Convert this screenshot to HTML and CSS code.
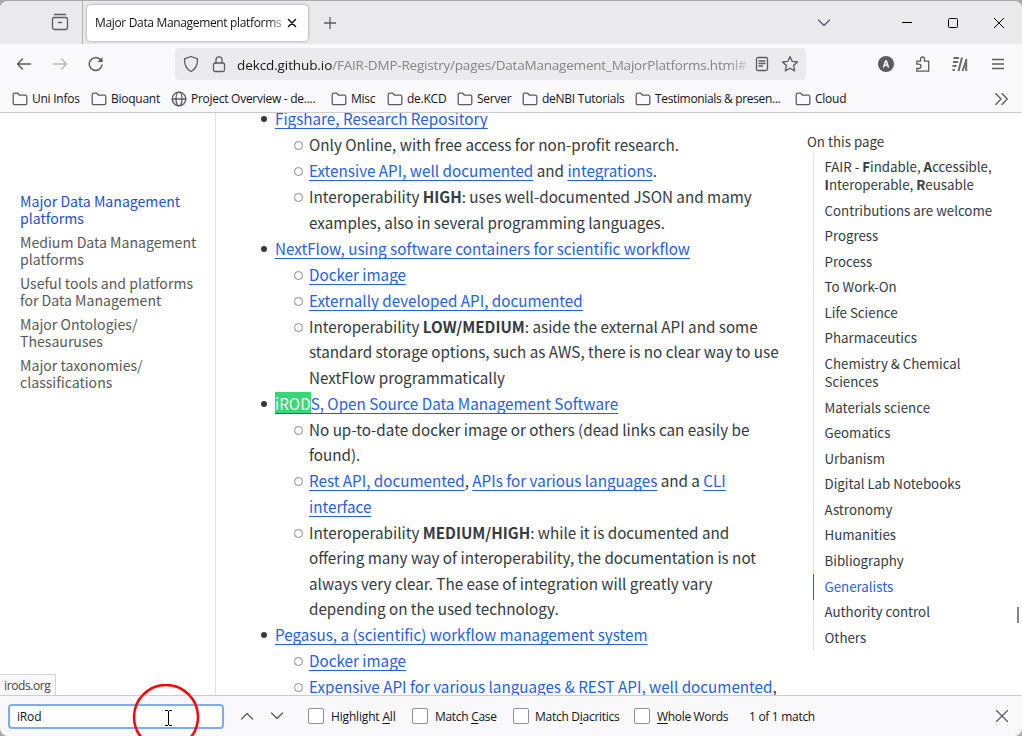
FILE: index.html
```html
<!DOCTYPE html>
<html lang="en">
<head>
<meta charset="utf-8">
<title>Major Data Management platforms</title>
<link rel="stylesheet" href="styles.css">
</head>
<body>
<div class="window">
  <div class="tabbar">
    <div class="tabview"><svg width="18" height="18" viewBox="0 0 18 18" class="ic"><path d="M3.5 1.5h11" /><rect x="1.5" y="4.5" width="15" height="12" rx="2"/><path d="M7.500 9.500h3"/></svg></div>
    <div class="tab"><span class="tab-title">Major Data Management platforms</span><svg width="10" height="10" viewBox="0 0 10 10" class="ic dark"><path d="M1.500 1.500l7 7M8.500 1.500l-7 7"/></svg></div>
    <svg width="12" height="12" viewBox="0 0 12 12" class="ic plus"><path d="M6 0v12M0 6h12"/></svg>
    <div class="winbtns">
      <svg width="12" height="8" viewBox="0 0 12 8" class="ic chev"><path d="M.5 1L6 6.500 11.500 1"/></svg>
      <svg width="10" height="10" viewBox="0 0 10 10" class="ic win min"><path d="M0 4.500h10"/></svg>
      <svg width="10" height="10" viewBox="0 0 10 10" class="ic win max"><rect x=".5" y=".5" width="9" height="9" rx="1"/></svg>
      <svg width="10" height="10" viewBox="0 0 10 10" class="ic win"><path d="M0 0l10 10M10 0L0 10"/></svg>
    </div>
  </div>
  <div class="navbar">
    <svg width="16" height="16" viewBox="0 0 16 16" class="ic nav"><path d="M14.500 8H2M6.500 3L1.500 8l5 5"/></svg>
    <svg width="16" height="16" viewBox="0 0 16 16" class="ic nav off"><path d="M1.500 8H14M9.500 3l5 5-5 5"/></svg>
    <svg width="16" height="16" viewBox="0 0 16 16" class="ic nav"><path d="M14 9a6.400 6.400 0 1 1-1.800-5.500L14 5"/><path d="M14.500 1v5h-5z" class="fill"/></svg>
    <div class="urlbar">
      <svg width="16" height="18" viewBox="0 0 16 18" class="ic"><path d="M8 1.500l6.500 2.300c.3 6-1.500 10.200-6.500 12.700C3 14 1.200 9.800 1.500 3.800z"/></svg>
      <svg width="14" height="18" viewBox="0 0 14 18" class="ic lock"><rect x="1.500" y="8" width="11" height="8.500" rx="1.500"/><path d="M4 8V4.800a3 3 0 0 1 6 0V8"/></svg>
      <span class="url"><b>dekcd.github.io</b>/FAIR-DMP-Registry/pages/DataManagement_MajorPlatforms.html#</span>
      <svg width="14" height="16" viewBox="0 0 14 16" class="ic reader"><rect x="1.500" y="1.500" width="11" height="13" rx="1.500"/><path d="M4 5h6M4 7.500h6M4 10h3.500"/></svg>
      <svg width="18" height="18" viewBox="0 0 18 18" class="ic star"><path d="M9 1.500l2.200 4.900 5.300.6-3.900 3.600 1.100 5.300L9 13.200l-4.700 2.700 1.100-5.300L1.500 7l5.300-.6z"/></svg>
    </div>
    <div class="tools">
      <svg width="16" height="16" viewBox="0 0 16 16"><circle cx="8" cy="8" r="8" fill="#5b5b66"/><path d="M5.500 11.500L7.600 5h.8l2.100 6.500M6.500 9.300h3" fill="none" stroke="#fff" stroke-width="1.400"/></svg>
      <svg width="16" height="18" viewBox="0 0 16 18" class="ic puzzle"><path d="M1.800 9.200V6.200h3.700V4a2 2 0 0 1 4 0v2.200h4.200v10H1.800v-2.700h2a2.100 2.100 0 0 0 0-4.300z"/></svg>
      <svg width="16" height="16" viewBox="0 0 16 16" class="ext"><path d="M1.500 2h5.500M1 6h5M.5 10h4M.5 14h2.500M6.500 15L10 1.500M10.500 15L14 5"/><path d="M14.200 15V3"/></svg>
      <svg width="12" height="12" viewBox="0 0 12 12" class="ic"><path d="M0 1.500h12M0 6h12M0 10.500h12"/></svg>
    </div>
  </div>
  <div class="bookmarks">
    <span class="bm b1"><svg width="16" height="14" viewBox="0 0 16 14" class="ic"><path d="M1.200 2.700a1.500 1.500 0 0 1 1.500-1.500h3l1.800 2h5.800a1.500 1.500 0 0 1 1.500 1.500v6.500a1.500 1.500 0 0 1-1.500 1.500H2.700a1.500 1.500 0 0 1-1.500-1.500z"/></svg>Uni Infos</span>
    <span class="bm b2"><svg width="16" height="14" viewBox="0 0 16 14" class="ic"><path d="M1.200 2.700a1.500 1.500 0 0 1 1.500-1.500h3l1.800 2h5.800a1.500 1.500 0 0 1 1.500 1.500v6.500a1.500 1.500 0 0 1-1.500 1.500H2.700a1.500 1.500 0 0 1-1.500-1.500z"/></svg>Bioquant</span>
    <span class="bm b3"><svg width="16" height="16" viewBox="0 0 16 16" class="ic"><circle cx="8" cy="8" r="6.800"/><ellipse cx="8" cy="8" rx="3" ry="6.800"/><path d="M1.200 8h13.600"/></svg>Project Overview - de....</span>
    <span class="bm b4"><svg width="16" height="14" viewBox="0 0 16 14" class="ic"><path d="M1.200 2.700a1.500 1.500 0 0 1 1.500-1.500h3l1.800 2h5.800a1.500 1.500 0 0 1 1.500 1.500v6.500a1.500 1.500 0 0 1-1.500 1.500H2.700a1.500 1.500 0 0 1-1.500-1.500z"/></svg>Misc</span>
    <span class="bm b5"><svg width="16" height="14" viewBox="0 0 16 14" class="ic"><path d="M1.200 2.700a1.500 1.500 0 0 1 1.500-1.500h3l1.800 2h5.800a1.500 1.500 0 0 1 1.500 1.500v6.500a1.500 1.500 0 0 1-1.500 1.500H2.700a1.500 1.500 0 0 1-1.500-1.500z"/></svg>de.KCD</span>
    <span class="bm b6"><svg width="16" height="14" viewBox="0 0 16 14" class="ic"><path d="M1.200 2.700a1.500 1.500 0 0 1 1.500-1.500h3l1.800 2h5.800a1.500 1.500 0 0 1 1.500 1.500v6.500a1.500 1.500 0 0 1-1.500 1.500H2.700a1.500 1.500 0 0 1-1.500-1.500z"/></svg>Server</span>
    <span class="bm b7"><svg width="16" height="14" viewBox="0 0 16 14" class="ic"><path d="M1.200 2.700a1.500 1.500 0 0 1 1.500-1.500h3l1.800 2h5.800a1.500 1.500 0 0 1 1.500 1.500v6.500a1.500 1.500 0 0 1-1.500 1.500H2.700a1.500 1.500 0 0 1-1.500-1.500z"/></svg>deNBI Tutorials</span>
    <span class="bm b8"><svg width="16" height="14" viewBox="0 0 16 14" class="ic"><path d="M1.200 2.700a1.500 1.500 0 0 1 1.500-1.500h3l1.800 2h5.800a1.500 1.500 0 0 1 1.500 1.500v6.500a1.500 1.500 0 0 1-1.500 1.500H2.700a1.500 1.500 0 0 1-1.500-1.500z"/></svg>Testimonials &amp; presen...</span>
    <span class="bm b9"><svg width="16" height="14" viewBox="0 0 16 14" class="ic"><path d="M1.200 2.700a1.500 1.500 0 0 1 1.500-1.500h3l1.800 2h5.800a1.500 1.500 0 0 1 1.500 1.500v6.500a1.500 1.500 0 0 1-1.500 1.500H2.700a1.500 1.500 0 0 1-1.500-1.500z"/></svg>Cloud</span>
    <svg width="13" height="12" viewBox="0 0 13 12" class="ic more"><path d="M.7.500L6 6 .7 11.500M7 .500L12.300 6 7 11.500"/></svg>
  </div>

  <div class="page">
    <nav class="sidebar">
      <a class="active">Major Data Management<br>platforms</a>
      <a>Medium Data Management<br>platforms</a>
      <a>Useful tools and platforms<br>for Data Management</a>
      <a>Major Ontologies/<br>Thesauruses</a>
      <a>Major taxonomies/<br>classifications</a>
    </nav>
    <main class="content">
      <ul class="outer">
        <li><a>Figshare, Research Repository</a>
          <ul>
            <li>Only Online, with free access for non-profit research.</li>
            <li><a>Extensive API, well documented</a> and <a>integrations</a>.</li>
            <li>Interoperability <b>HIGH</b>: uses well-documented JSON and mamy<br>examples, also in several programming languages.</li>
          </ul>
        </li>
        <li><a>NextFlow, using software containers for scientific workflow</a>
          <ul>
            <li><a>Docker image</a></li>
            <li><a>Externally developed API, documented</a></li>
            <li>Interoperability <b>LOW/MEDIUM</b>: aside the external API and some<br>standard storage options, such as AWS, there is no clear way to use<br>NextFlow programmatically</li>
          </ul>
        </li>
        <li><a><mark>iROD</mark>S, Open Source Data Management Software</a>
          <ul>
            <li>No up-to-date docker image or others (dead links can easily be<br>found).</li>
            <li><a>Rest API, documented</a>, <a>APIs for various languages</a> and a <a>CLI<br>interface</a></li>
            <li>Interoperability <b>MEDIUM/HIGH</b>: while it is documented and<br>offering many way of interoperability, the documentation is not<br>always very clear. The ease of integration will greatly vary<br>depending on the used technology.</li>
          </ul>
        </li>
        <li><a>Pegasus, a (scientific) workflow management system</a>
          <ul>
            <li><a>Docker image</a></li>
            <li><a>Expensive API for various languages &amp; REST API, well documented</a>,</li>
          </ul>
        </li>
      </ul>
    </main>
    <aside class="toc">
      <h2>On this page</h2>
      <div class="toc-list">
        <a class="fair">FAIR - <b>F</b>indable, <b>A</b>ccessible,<br><b>I</b>nteroperable, <b>R</b>eusable</a>
        <a>Contributions are welcome</a>
        <a>Progress</a>
        <a>Process</a>
        <a>To Work-On</a>
        <a>Life Science</a>
        <a>Pharmaceutics</a>
        <a>Chemistry &amp; Chemical<br>Sciences</a>
        <a>Materials science</a>
        <a>Geomatics</a>
        <a>Urbanism</a>
        <a>Digital Lab Notebooks</a>
        <a>Astronomy</a>
        <a>Humanities</a>
        <a>Bibliography</a>
        <a class="active">Generalists</a>
        <a>Authority control</a>
        <a>Others</a>
      </div>
    </aside>
    <div class="status">irods.org</div>
    <div class="scrollthumb"></div>
  </div>

  <div class="findbar">
    <div class="field">iRod</div>
    <svg width="12" height="8" viewBox="0 0 12 8" class="ic up"><path d="M.5 7L6 1.500 11.500 7"/></svg>
    <svg width="12" height="8" viewBox="0 0 12 8" class="ic down"><path d="M.5 1L6 6.500 11.500 1"/></svg>
    <span class="opt o1"><i></i><span>Highlight <u>A</u>ll</span></span>
    <span class="opt o2"><i></i><span>Match <u>C</u>ase</span></span>
    <span class="opt o3"><i></i><span>Match D<u>i</u>acritics</span></span>
    <span class="opt o4"><i></i><span><u>W</u>hole Words</span></span>
    <span class="matches">1 of 1 match</span>
    <svg width="12" height="12" viewBox="0 0 12 12" class="ic close"><path d="M.5.500l11 11M11.500.500l-11 11"/></svg>
  </div>
</div>
<svg class="pointer" width="68" height="52" viewBox="0 0 68 52"><circle cx="34" cy="33" r="32" fill="none" stroke="#f00" stroke-width="2.500"/><path d="M33 26.500h3M37 26.500h3M33 41.500h3M37 41.500h3M36.500 27v14" fill="none" stroke="#000"/></svg>
</body>
</html>
```
FILE: styles.css
```css
* { box-sizing: border-box; }
body { margin: 0; background: #aaa9ad; width: 1022px; height: 736px; overflow: hidden; position: relative; padding-top: 1px; font-family: "Open Sans", "Noto Sans", sans-serif; font-size: 12px; color: #15141a; }
.window { height: 735px; display: flex; flex-direction: column; border-radius: 8px; overflow: hidden; background: #f9f9fb; white-space: nowrap; }
svg { flex: none; display: block; }
.ic { fill: none; stroke: #5b5b66; stroke-width: 1.3; stroke-linecap: round; stroke-linejoin: round; }
.ic .fill { fill: #5b5b66; stroke: none; }
.dark { stroke: #15141a; stroke-width: 1.5; }
.off { opacity: .4; }

.tabbar { height: 43px; flex: none; background: #eaeaed; display: flex; align-items: center; }
.tabview { width: 83px; height: 43px; border-right: 1px solid #b2b2b7; padding: 12px 0 0 51px; }
.tab { margin-left: 4px; width: 221px; height: 36px; background: #fff; border-radius: 4px; box-shadow: 0 0 3px rgba(0,0,0,.4); display: flex; align-items: center; padding-left: 8px; }
.tab-title { width: 188px; overflow: hidden; letter-spacing: -.34px; margin-right: 4px; -webkit-mask-image: linear-gradient(to right, #000 92%, rgba(0,0,0,.35)); mask-image: linear-gradient(to right, #000 92%, rgba(0,0,0,.35)); }
.plus { margin-left: 16px; stroke-linecap: butt; }
.winbtns { margin-left: auto; margin-right: 18px; display: flex; align-items: center; }
.chev { margin-right: 72px; }
.win { stroke: #000; stroke-width: 1; stroke-linecap: butt; }
.min { margin-right: 36px; }
.max { margin-right: 36px; }

.navbar { height: 40px; flex: none; display: flex; align-items: center; padding-left: 16px; }
.nav { margin-right: 20px; stroke-width: 1.5; }
.urlbar { margin-left: 51px; width: 631px; height: 32px; background: #ebebee; border-radius: 4px; display: flex; align-items: center; padding-left: 8px; }
.lock { margin-left: 13px; margin-right: 11px; }
.url { width: 511px; padding-top: 1px; overflow: hidden; font-size: 13.5px; letter-spacing: -.2px; color: #85848a; -webkit-mask-image: linear-gradient(to right, #000 96%, rgba(0,0,0,.2)); mask-image: linear-gradient(to right, #000 96%, rgba(0,0,0,.2)); }
.url b { font-weight: 400; color: #15141a; letter-spacing: -.1px; }
.reader { margin-left: 7px; }
.star { margin-left: 12px; }
.tools { margin-left: 72px; display: flex; align-items: center; gap: 21px; }
.tools svg:last-child { margin-left: 3px; }
.ext { fill: none; stroke: #6b6b70; stroke-width: 2; }

.bookmarks { height: 29px; flex: none; display: flex; align-items: center; padding: 1px 0 0 12px; border-bottom: 1px solid #ccccd1; }
.bm { display: flex; align-items: center; gap: 4px; letter-spacing: -.25px; }
.b1 { width: 79px; } .b2 { width: 80px; } .b3 { width: 160px; } .b4 { width: 56px; } .b5 { width: 70px; }
.b6 { width: 65px; } .b7 { width: 113px; } .b8 { width: 160px; } .b9 { width: 200px; }
.b3 { letter-spacing: -.27px; }
.b8 { letter-spacing: -.35px; }

.page { height: 582px; flex: none; background: #fff; display: flex; overflow: hidden; position: relative; font-family: "Noto Sans CJK SC", sans-serif; color: #343a40; }
.sidebar { width: 216px; flex: none; border-right: 1px solid #dee2e6; padding: 80px 0 0 20px; display: flex; flex-direction: column; gap: 7px; font-size: 14.1px; line-height: 17px; color: #595959; }
.sidebar .active { color: #2251cc; }
.content { width: 591px; flex: none; padding-left: 59px; font-size: 15.22px; line-height: 25.5px; }
ul { list-style: none; margin: 0; padding: 0; }
.outer { margin-top: -7px; }
.content li { padding-top: .48px; }
.content li::before { content: ""; float: left; width: 6px; height: 6px; border-radius: 50%; background: #343a40; margin: 10px 0 0 -14px; }
.content li li { margin-left: 34px; }
.content li li::before { width: 7px; height: 7px; background: none; border: 1px solid #85898e; margin: 9px 0 0 -15px; }
.content a { color: #2761e3; text-decoration: underline; text-decoration-thickness: 1px; text-underline-offset: 3px; text-decoration-skip-ink: none; }
mark { background: #38d878; color: #fff; }
.toc h2 { margin: 19px 0 0; font-size: 13.3px; font-weight: 400; line-height: 20px; }
.toc-list { margin: 2px 0 0 6px; border-left: 1px solid #dee2e6; font-size: 13.3px; line-height: 18.53px; }
.toc-list a { display: block; padding: 3.5px 0 3.500px 10.500px; margin-left: -1px; border-left: 1px solid transparent; }
.toc-list .active { border-color: #2761e3; color: #2761e3; }
.status { position: absolute; left: 0; bottom: 0; width: 56px; height: 21px; padding-left: 4px; border: solid #d4d4d8; border-width: 1px 1px 0 0; background: #f9f9fb; font: 12px/22px "Open Sans", sans-serif; letter-spacing: -.4px; color: #444; }
.scrollthumb { position: absolute; right: 3px; top: 494px; width: 2px; height: 16px; background: #858585; }

.findbar { height: 41px; flex: none; border-top: 1px solid #ccccd1; display: flex; align-items: center; padding-left: 8px; letter-spacing: -.17px; }
.field { width: 216px; height: 25px; border: 2px solid #7dadf0; border-radius: 4px; background: #fff; padding-left: 7px; line-height: 22px; }
.up { margin-left: 17px; margin-right: 18px; }
.down { margin-right: 25px; }
.opt { display: flex; align-items: center; gap: 7px; }
.opt span, .matches { padding-top: 1px; }
.opt i { width: 16px; height: 16px; border: 1px solid #8f8f9d; border-radius: 2px; background: #fff; }
.opt u { text-underline-offset: 2px; }
.o1 { width: 104px; } .o2 { width: 101px; letter-spacing: -.3px; } .o3 { width: 121px; letter-spacing: -.27px; } .o4 { width: 107px; }
.o3 { gap: 6px; }
.matches { margin-left: 8px; letter-spacing: -.3px; }
.o4 { letter-spacing: -.33px; }
.close { margin-left: auto; margin-right: 14px; }
.pointer { position: absolute; left: 132px; top: 684px; }
```
